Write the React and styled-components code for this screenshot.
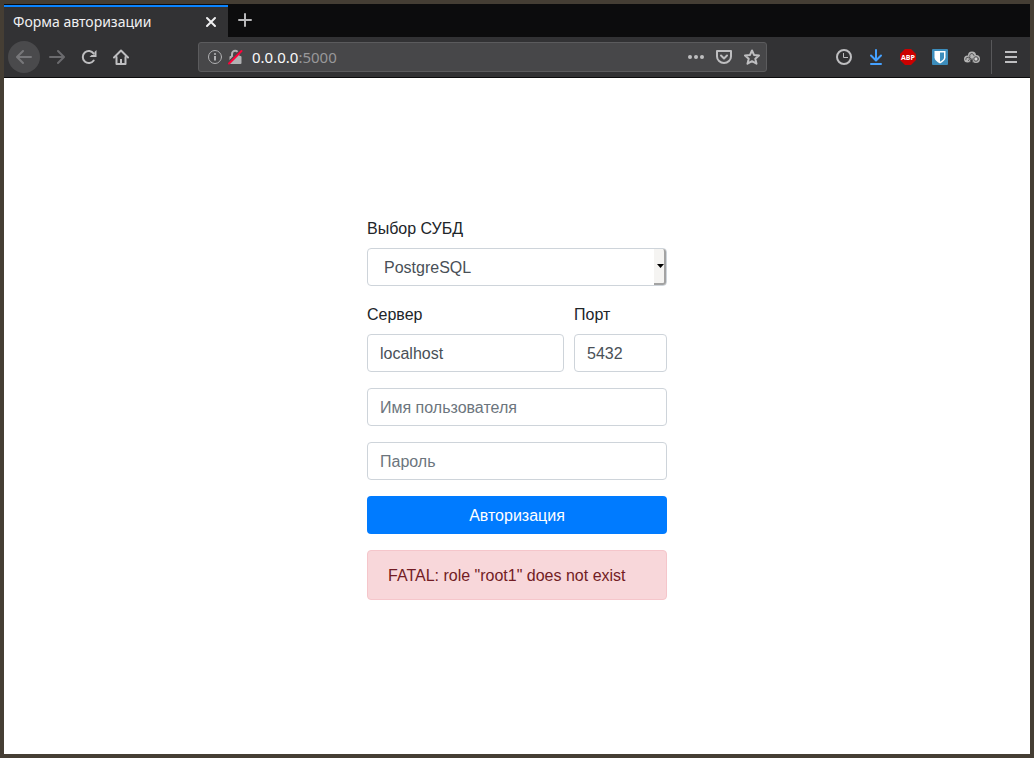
import React from "react";
import styled, { createGlobalStyle, css } from "styled-components";

const GlobalStyle = createGlobalStyle`
  *, *::before, *::after { box-sizing: border-box; }
  body { margin: 0; background: #453e34; }
  button, input, select { font: inherit; margin: 0; }
`;

const Window = styled.div`
  min-height: 100vh;
  display: flex;
  flex-direction: column;
  border: 4px solid #453e34;
  background: #fff;
`;

const TabStrip = styled.div`
  display: flex;
  height: 33px;
  padding-top: 1px;
  background: #0c0c0d;
  font-family: "Noto Sans", sans-serif;
`;

const Tab = styled.div`
  display: flex;
  align-items: center;
  justify-content: space-between;
  width: 224px;
  padding: 0 9px 2px;
  border-top: 2px solid #0a84ff;
  background: #323234;
  color: #f0f0f2;
  font-size: 14px;
`;

const IconButton = styled.button`
  display: flex;
  align-items: center;
  justify-content: center;
  flex: none;
  width: ${(p) => p.$size || 32}px;
  height: ${(p) => p.$size || 32}px;
  padding: 0;
  border: 0;
  border-radius: ${(p) => (p.$round ? "50%" : "2px")};
  background: ${(p) => (p.$round ? "#4a4a4c" : "transparent")};
  color: ${(p) => p.$color || "#bebec0"};
`;

const Toolbar = styled.div`
  display: flex;
  align-items: center;
  height: 41px;
  padding: 0 3px 0 4px;
  border-bottom: 1px solid #0c0c0d;
  background: #323234;
  font-family: "Noto Sans", sans-serif;
`;

const NavButtons = styled.div`
  display: flex;
  flex: none;
  > :first-child { margin-right: 1px; }
`;

const Spring = styled.div`
  flex: 0 1 61px;
`;

const AddressBar = styled.div`
  display: flex;
  align-items: center;
  flex: 1;
  min-width: 0;
  height: 30px;
  padding: 0 0 0 6px;
  border: 1px solid #5b5b5d;
  border-radius: 3px;
  background: #474749;
`;

const Address = styled.div`
  flex: 1;
  padding: 0 7px;
  color: #f9f9fa;
  font-size: 15px;
  line-height: 20px;
  white-space: nowrap;
  outline: none;
`;

const Port = styled.span`
  color: #98989a;
`;

const Separator = styled.div`
  width: 1px;
  height: 34px;
  margin: 0 3px;
  background: #58585a;
`;

const Page = styled.main`
  display: flex;
  flex: 1;
  align-items: center;
  justify-content: center;
  color: #212529;
  font: 16px/24px "Liberation Sans", Arial, sans-serif;
`;

const Form = styled.form`
  display: grid;
  gap: 16px;
  width: 300px;
  padding-bottom: 16px;
`;

const Row = styled.div`
  display: grid;
  grid-template-columns: 197px 1fr;
  gap: 10px;
`;

const Field = styled.div`
  display: grid;
  gap: 6px;
  min-width: 0;
`;

const Label = styled.label`
  line-height: 26px;
`;

const control = css`
  display: block;
  width: 100%;
  height: 38px;
  border: 1px solid #ced4da;
  border-radius: 4px;
  background: #fff;
  color: #495057;
`;

const Input = styled.input`
  ${control}
  padding: 7px 12px 5px;
  &::placeholder { color: #6c757d; opacity: 1; }
`;

const SelectBox = styled.div`
  position: relative;
`;

const Select = styled.select`
  ${control}
  appearance: none;
  padding: 7px 16px 5px;
`;

const SelectArrow = styled.span`
  position: absolute;
  top: 1px;
  right: 1px;
  bottom: 1px;
  display: flex;
  align-items: center;
  justify-content: flex-end;
  width: 12px;
  border-right: 2px solid #a3a3a3;
  border-bottom: 2px solid #a3a3a3;
  border-radius: 0 3px 3px 0;
  background: #f5f4f2;
  pointer-events: none;
`;

const Submit = styled.button`
  height: 38px;
  padding: 7px 12px 5px;
  border: 0;
  border-radius: 4px;
  background: #007bff;
  color: #fff;
`;

const Alert = styled.div`
  padding: 13px 20px 11px;
  border: 1px solid #f5c6cb;
  border-radius: 4px;
  background: #f8d7da;
  color: #721c24;
`;

const AbpText = styled.text`
  font: bold 7px "Open Sans", "Noto Sans", sans-serif;
  fill: #fff;
  text-anchor: middle;
`;

const Icon = ({ children, size = 16, w = 2 }) => (
  <svg
    width={size}
    height={size}
    viewBox={`0 0 ${size} ${size}`}
    fill="none"
    stroke="currentColor"
    strokeWidth={w}
    strokeLinecap="round"
    strokeLinejoin="round"
    aria-hidden="true"
  >
    {children}
  </svg>
);

export default function App() {
  return (
    <Window>
      <GlobalStyle />
      <TabStrip>
        <Tab>
          <span>Форма авторизации</span>
          <IconButton $size={16} $color="#f0f0f2" aria-label="Закрыть вкладку">
            <Icon><path d="M4 5l8 8M12 5l-8 8" /></Icon>
          </IconButton>
        </Tab>
        <IconButton $color="#b8b8ba" aria-label="Новая вкладка">
          <Icon><path d="M9 1v12M3 7h12" /></Icon>
        </IconButton>
      </TabStrip>

      <Toolbar>
        <NavButtons>
          <IconButton $round $color="#77777a" aria-label="Назад">
            <Icon><path d="M15 8H1.500M7 2L1 8l6 6" /></Icon>
          </IconButton>
          <IconButton $color="#6b6b6e" aria-label="Вперёд">
            <Icon><path d="M1 8h13.500M9 2l6 6-6 6" /></Icon>
          </IconButton>
          <IconButton aria-label="Обновить">
            <Icon>
              <path d="M12.700 4.600A6 6 0 1 0 12.700 11.500" />
              <path d="M15.500 1v7H8.500l2-2h3V3z" fill="currentColor" stroke="none" />
            </Icon>
          </IconButton>
          <IconButton aria-label="Домой">
            <Icon>
              <path d="M1 8.500L8 1.500l7 7" />
              <path d="M3.500 8v7h9V8" />
              <path d="M7 10h2v4.500H7z" fill="currentColor" stroke="none" />
            </Icon>
          </IconButton>
        </NavButtons>
        <Spring />
        <AddressBar>
          <IconButton $size={20} $color="#b1b1b3" aria-label="Сведения о сайте">
            <Icon w={1}>
              <circle cx="8" cy="8" r="6.500" />
              <path d="M8 7v4.500" strokeWidth="2" strokeLinecap="butt" />
              <circle cx="8" cy="5" r="1.100" fill="currentColor" stroke="none" />
            </Icon>
          </IconButton>
          <IconButton $size={20} $color="#b1b1b3" aria-label="Незащищённое соединение">
            <Icon>
              <path d="M5 8V5a3.200 3.200 0 0 1 6.400 0v3" />
              <rect x="2.500" y="7" width="12" height="8" rx="1" fill="currentColor" stroke="none" />
              <path d="M1.500 14L14 1.500" stroke="#474749" strokeWidth="3" strokeLinecap="butt" />
              <path d="M2 14.500L14.500 2" stroke="#ff0039" strokeWidth="2" />
            </Icon>
          </IconButton>
          <Address role="textbox" aria-label="Адрес" contentEditable suppressContentEditableWarning spellCheck={false}>
            0.0.0.0<Port>:5000</Port>
          </Address>
          <IconButton $size={28} aria-label="Действия на странице">
            <Icon>
              <g fill="currentColor" stroke="none">
                <circle cx="2" cy="8" r="2" />
                <circle cx="8" cy="8" r="2" />
                <circle cx="14" cy="8" r="2" />
              </g>
            </Icon>
          </IconButton>
          <IconButton $size={28} aria-label="Сохранить в Pocket">
            <Icon>
              <path d="M1 2h14v5.500a7 6.500 0 0 1-14 0z" />
              <path d="M5 6.500l3 3 3-3" />
            </Icon>
          </IconButton>
          <IconButton $size={28} aria-label="Добавить в закладки">
            <Icon>
              <path d="M8 1.500l2 4.400 5 .5-3.700 3.300 1.200 5L8 12.200l-4.500 2.500 1.200-5L1 6.400l5-.5z" />
            </Icon>
          </IconButton>
        </AddressBar>
        <Spring />
        <IconButton aria-label="Журнал">
          <Icon>
            <circle cx="8" cy="8" r="7" />
            <path d="M7.500 4v4.500H12" strokeWidth="1" strokeLinecap="butt" strokeLinejoin="miter" />
          </Icon>
        </IconButton>
        <IconButton $color="#45a1ff" aria-label="Загрузки">
          <Icon><path d="M8 1v10M3 6.500l5 5 5-5M3 15h10" /></Icon>
        </IconButton>
        <IconButton aria-label="Adblock Plus">
          <Icon>
            <path d="M5 0h6l5 5v6l-5 5H5l-5-5V5z" fill="#cc0000" stroke="none" />
            <AbpText x="8" y="10.500" stroke="none">ABP</AbpText>
          </Icon>
        </IconButton>
        <IconButton aria-label="Bitwarden">
          <Icon>
            <rect width="16" height="16" rx="1" fill="#3c8dbc" stroke="none" />
            <path d="M2.500 2h11v6.500c0 2.500-2.500 4.300-5.500 6-3-1.700-5.500-3.500-5.500-6z" fill="#fff" stroke="none" />
            <path d="M8 3.500h4v5c0 1.600-1.700 2.900-4 4.200z" fill="#3c8dbc" stroke="none" />
          </Icon>
        </IconButton>
        <IconButton aria-label="Прокси">
          <Icon>
            <g stroke="none" fill="#b4b4b4">
              <circle cx="8" cy="6.500" r="4" />
              <circle cx="3.500" cy="10" r="3.500" />
              <circle cx="12" cy="10" r="4" />
            </g>
            <g stroke="#555557" strokeWidth="1">
              <path d="M6 8a2.200 2.200 0 1 1 4-1.500M1.800 10.500a1.800 1.800 0 1 1 2.700 1.200" />
              <circle cx="12" cy="10" r="2.300" />
              <path d="M5 8l2 2-1 3M8 9.500l1 4" />
            </g>
            <circle cx="12" cy="10" r="1" stroke="none" fill="#e0e0e0" />
          </Icon>
        </IconButton>
        <Separator />
        <IconButton aria-label="Меню">
          <Icon><path d="M2 3h12M2 8h12M2 13h12" strokeLinecap="butt" /></Icon>
        </IconButton>
      </Toolbar>

      <Page>
        <Form onSubmit={(e) => e.preventDefault()}>
          <Field>
            <Label htmlFor="dbms">Выбор СУБД</Label>
            <SelectBox>
              <Select id="dbms" defaultValue="postgresql">
                <option value="postgresql">PostgreSQL</option>
              </Select>
              <SelectArrow>
                <svg width="7" height="4" viewBox="0 0 7 4" aria-hidden="true">
                  <path d="M0 0h7L3.500 4z" fill="#000" />
                </svg>
              </SelectArrow>
            </SelectBox>
          </Field>
          <Row>
            <Field>
              <Label htmlFor="server">Сервер</Label>
              <Input id="server" defaultValue="localhost" />
            </Field>
            <Field>
              <Label htmlFor="port">Порт</Label>
              <Input id="port" defaultValue="5432" />
            </Field>
          </Row>
          <Input aria-label="Имя пользователя" placeholder="Имя пользователя" />
          <Input type="password" aria-label="Пароль" placeholder="Пароль" />
          <Submit type="submit">Авторизация</Submit>
          <Alert role="alert">FATAL: role "root1" does not exist</Alert>
        </Form>
      </Page>
    </Window>
  );
}
